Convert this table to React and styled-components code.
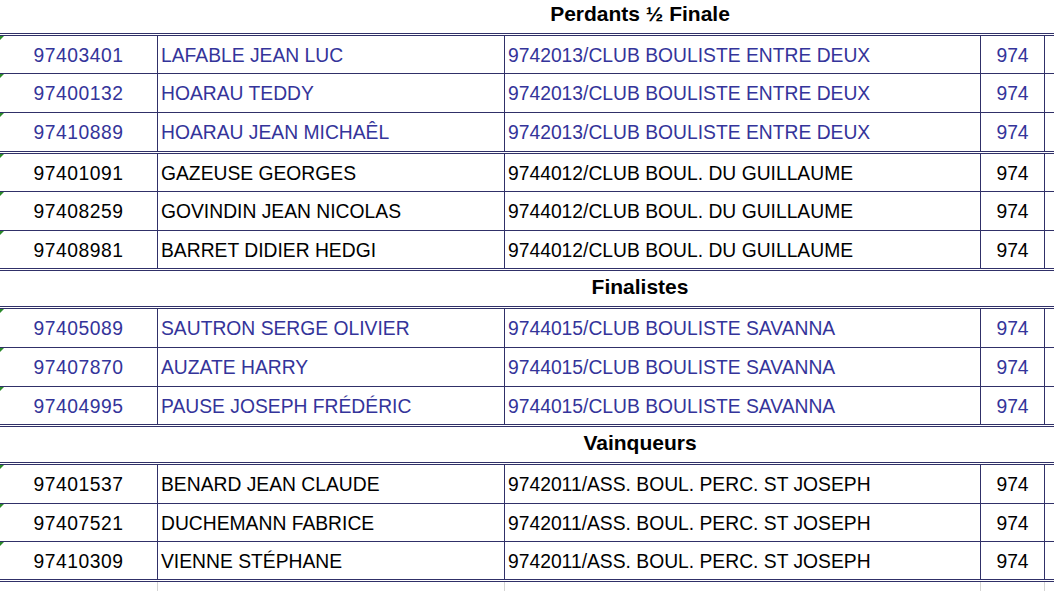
import React from 'react';
import styled, { createGlobalStyle } from 'styled-components';

const LINE = '#303068';
const BLUE = '#34349a';

const GlobalStyle = createGlobalStyle`
    html, body {
        margin: 0;
        padding: 0;
        background: #ffffff;
    }
    body {
        font-family: "Liberation Sans", Arial, sans-serif;
        width: 1054px;
        height: 591px;
        overflow: hidden;
    }
`;

const Sheet = styled.div`
    width: 1054px;
    display: flex;
    flex-direction: column;
`;

const SectionTitle = styled.div`
    height: ${p => p.h}px;
    display: flex;
    align-items: center;
    justify-content: center;
    padding-left: 226px;
    padding-bottom: ${p => p.lift || 0}px;
    box-sizing: border-box;
    font-weight: bold;
    font-size: 21px;
    color: #000;
`;

const Group = styled.div`
    border-top: 3px double ${LINE};
    display: flex;
    flex-direction: column;
`;

const Row = styled.div`
    display: grid;
    grid-template-columns: 158px 347px 476px 64px 1fr;
    height: ${p => p.h}px;
    color: ${p => (p.blue ? BLUE : '#000')};
    font-size: 19.3px;

    & + & {
        border-top: 1px solid ${LINE};
    }
`;

const Cell = styled.div`
    position: relative;
    display: flex;
    align-items: center;
    justify-content: ${p => (p.center ? 'center' : 'flex-start')};
    padding: 2px 0 0 ${p => (p.center ? 0 : 3)}px;
    border-right: ${p => (p.open ? 'none' : `1px solid ${LINE}`)};
    letter-spacing: ${p => p.spread || 0}px;
    white-space: nowrap;
    overflow: hidden;
`;

const TextFlag = styled.span`
    position: absolute;
    top: 0;
    left: 0;
    width: 0;
    height: 0;
    border-top: 4px solid #2a8a2a;
    border-right: 4px solid transparent;
`;

const Filler = styled.div`
    display: grid;
    grid-template-columns: 158px 347px 476px 64px 1fr;
    height: 9px;
    border-top: 3px double ${LINE};
`;

const FillerCell = styled.div`
    border-right: ${p => (p.open ? 'none' : '1px solid #d4d4d4')};
`;

const groups = [
    {
        title: null,
        blue: true,
        heights: [37, 38, 38],
        rows: [
            ['97403401', 'LAFABLE JEAN LUC', '9742013/CLUB BOULISTE ENTRE DEUX'],
            ['97400132', 'HOARAU TEDDY', '9742013/CLUB BOULISTE ENTRE DEUX'],
            ['97410889', 'HOARAU JEAN MICHAÊL', '9742013/CLUB BOULISTE ENTRE DEUX'],
        ],
    },
    {
        title: null,
        blue: false,
        heights: [37, 38, 37],
        rows: [
            ['97401091', 'GAZEUSE GEORGES', '9744012/CLUB BOUL. DU GUILLAUME'],
            ['97408259', 'GOVINDIN JEAN NICOLAS', '9744012/CLUB BOUL. DU GUILLAUME'],
            ['97408981', 'BARRET DIDIER HEDGI', '9744012/CLUB BOUL. DU GUILLAUME'],
        ],
    },
    {
        title: 'Finalistes',
        blue: true,
        heights: [38, 38, 37],
        rows: [
            ['97405089', 'SAUTRON SERGE OLIVIER', '9744015/CLUB BOULISTE SAVANNA'],
            ['97407870', 'AUZATE HARRY', '9744015/CLUB BOULISTE SAVANNA'],
            ['97404995', 'PAUSE JOSEPH FRÉDÉRIC', '9744015/CLUB BOULISTE SAVANNA'],
        ],
    },
    {
        title: 'Vainqueurs',
        blue: false,
        heights: [38, 37, 37],
        rows: [
            ['97401537', 'BENARD JEAN CLAUDE', '9742011/ASS. BOUL. PERC. ST JOSEPH'],
            ['97407521', 'DUCHEMANN FABRICE', '9742011/ASS. BOUL. PERC. ST JOSEPH'],
            ['97410309', 'VIENNE STÉPHANE', '9742011/ASS. BOUL. PERC. ST JOSEPH'],
        ],
    },
];

const PlayerRow = ({ h, blue, licence, name, club }) => (
    <Row h={h} blue={blue}>
        <Cell center spread={0.5}>
            <TextFlag />
            {licence}
        </Cell>
        <Cell>{name}</Cell>
        <Cell>{club}</Cell>
        <Cell center>974</Cell>
        <Cell open />
    </Row>
);

export default function App() {
    return (
        <Sheet>
            <GlobalStyle />
            <SectionTitle h={33} lift={6}>Perdants ½ Finale</SectionTitle>
            {groups.map((g, gi) => (
                <React.Fragment key={gi}>
                    {g.title && (
                        <Group>
                            <SectionTitle h={35} lift={3}>{g.title}</SectionTitle>
                        </Group>
                    )}
                    <Group>
                        {g.rows.map((r, ri) => (
                            <PlayerRow
                                key={r[0]}
                                h={g.heights[ri]}
                                blue={g.blue}
                                licence={r[0]}
                                name={r[1]}
                                club={r[2]}
                            />
                        ))}
                    </Group>
                </React.Fragment>
            ))}
            <Filler>
                <FillerCell />
                <FillerCell />
                <FillerCell />
                <FillerCell />
                <FillerCell open />
            </Filler>
        </Sheet>
    );
}
